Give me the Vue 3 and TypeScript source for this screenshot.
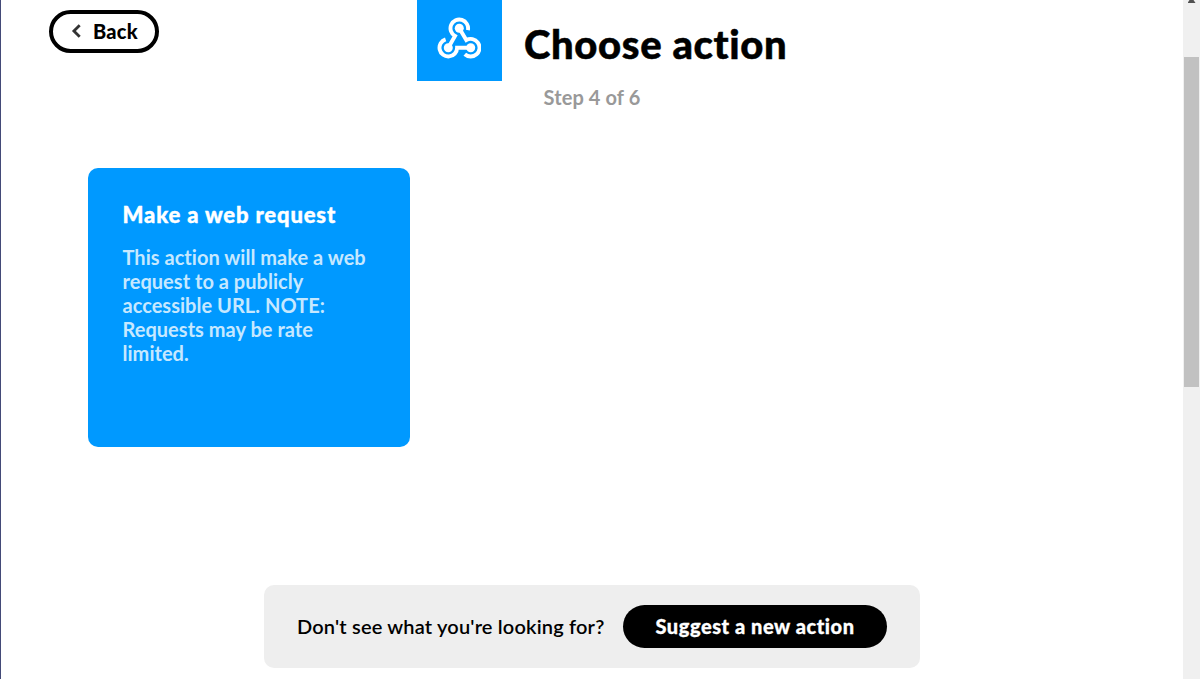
<script setup lang="ts">
type Action = {
  id: string
  title: string
  description: string
}

const step = 4
const totalSteps = 6

const actions: Action[] = [
  {
    id: 'make_web_request',
    title: 'Make a web request',
    description:
      'This action will make a web request to a publicly accessible URL. NOTE: Requests may be rate limited.',
  },
]
</script>

<template>
  <div class="window">
    <main class="page">
      <header class="header">
        <button class="back" type="button">
          <svg class="back__icon" viewBox="0 0 10 14" aria-hidden="true">
            <path d="M8.2 1.2 2.4 7 8.2 12.8" />
          </svg>
          <span class="back__label">Back</span>
        </button>
        <div class="service">
          <svg class="service__icon" viewBox="0 0 44 42" aria-hidden="true">
            <path d="M30.9 13.1A8.8 8.8 0 1 0 18 19L11.3 30.7" />
            <path d="M8.6 22.3A8.8 8.8 0 1 0 20.1 30.7H33.7" />
            <path d="M27.8 37.2A8.8 8.8 0 1 0 29.3 23.1L22.3 11.3" />
            <circle cx="22.3" cy="11.3" r="4.5" />
            <circle cx="11.3" cy="30.7" r="4.5" />
            <circle cx="33.7" cy="30.7" r="4.5" />
          </svg>
        </div>
        <h1 class="title">Choose action</h1>
      </header>
      <p class="step">Step {{ step }} of {{ totalSteps }}</p>

      <section class="actions">
        <article v-for="action in actions" :key="action.id" class="card">
          <h2 class="card__title">{{ action.title }}</h2>
          <p class="card__text">{{ action.description }}</p>
        </article>
      </section>

      <footer class="suggest">
        <span class="suggest__text">Don't see what you're looking for?</span>
        <button class="suggest__button" type="button">Suggest a new action</button>
      </footer>
    </main>

    <div class="scrollbar" aria-hidden="true">
      <div class="scrollbar__arrow" />
      <div class="scrollbar__thumb" />
    </div>
  </div>
</template>

<style>
body {
  background: #fff;
  overflow: hidden;
}
</style>

<style scoped>
.window {
  display: flex;
  box-sizing: border-box;
  height: 679px;
  border-left: 1px solid #434a78;
  font-family: Lato, "Open Sans", sans-serif;
  font-variant-ligatures: none;
  color: #000;
}

.page {
  flex: 1;
  display: flex;
  flex-direction: column;
}

.header {
  display: flex;
  align-items: flex-start;
  height: 81px;
}

.back {
  display: flex;
  align-items: center;
  box-sizing: border-box;
  width: 110px;
  height: 43px;
  margin: 10px 258px 0 48px;
  padding: 0 0 2px 18px;
  border: 4px solid #000;
  border-radius: 22px;
  background: #fff;
  font: 900 20px/24px Lato, sans-serif;
  letter-spacing: 0.2px;
  color: #000;
  white-space: nowrap;
}

.back__icon {
  width: 11px;
  height: 14px;
  margin-right: 11px;
  fill: none;
  stroke: #333;
  stroke-width: 2.8;
}

.service {
  box-sizing: border-box;
  width: 85px;
  height: 80.5px;
  padding: 17px 0 0 20px;
  background: #09f;
}

.service__icon {
  display: block;
  width: 44px;
  height: 42px;
  fill: none;
  stroke: #fff;
  stroke-width: 3.9;
}

.service__icon circle {
  fill: #fff;
  stroke: none;
}

.title {
  margin: 19px 0 0 22px;
  font-size: 40px;
  font-weight: 900;
  line-height: 50px;
  letter-spacing: 0.65px;
  white-space: nowrap;
  -webkit-text-stroke: 0.5px currentColor;
}

.step {
  margin: 4px 0 0;
  font-size: 20px;
  font-weight: 700;
  line-height: 24px;
  letter-spacing: 0.1px;
  text-align: center;
  color: #999;
}

.actions {
  display: flex;
  margin: 59px 0 0 87px;
}

.card {
  box-sizing: border-box;
  width: 322px;
  height: 279px;
  padding: 33px 34px 32px 34.5px;
  border-radius: 10px;
  background: #09f;
  color: #fff;
}

.card__title {
  margin: 0;
  font-size: 22px;
  font-weight: 900;
  line-height: 28px;
  letter-spacing: 0.85px;
  white-space: nowrap;
  -webkit-text-stroke: 0.4px currentColor;
}

.card__text {
  margin: 16px 0 0;
  font-size: 20px;
  font-weight: 700;
  line-height: 24px;
  letter-spacing: 0.03px;
  color: #c6e8ff;
}

.suggest {
  display: flex;
  align-items: center;
  box-sizing: border-box;
  width: 656px;
  height: 83px;
  margin: 138px 0 0 263px;
  padding: 0 33px;
  justify-content: space-between;
  border-radius: 10px;
  background: #eee;
}

.suggest__text {
  padding-bottom: 2px;
  font-size: 20px;
  font-weight: 600;
  letter-spacing: 0.18px;
  white-space: nowrap;
}

.suggest__button {
  width: 264px;
  height: 43px;
  padding: 0 0 2px;
  border: 0;
  border-radius: 22px;
  background: #000;
  font: 900 20px/24px Lato, sans-serif;
  letter-spacing: 0.55px;
  color: #fff;
  white-space: nowrap;
  -webkit-text-stroke: 0.3px currentColor;
}

.scrollbar {
  display: flex;
  flex-direction: column;
  align-items: center;
  width: 17px;
  background: #f0f0f0;
}

.scrollbar__arrow {
  width: 8px;
  height: 3px;
  background: #505050;
  clip-path: polygon(25% 0, 75% 0, 100% 100%, 0 100%);
}

.scrollbar__thumb {
  width: 15px;
  height: 330px;
  margin-top: 54px;
  background: #c1c1c1;
}
</style>
